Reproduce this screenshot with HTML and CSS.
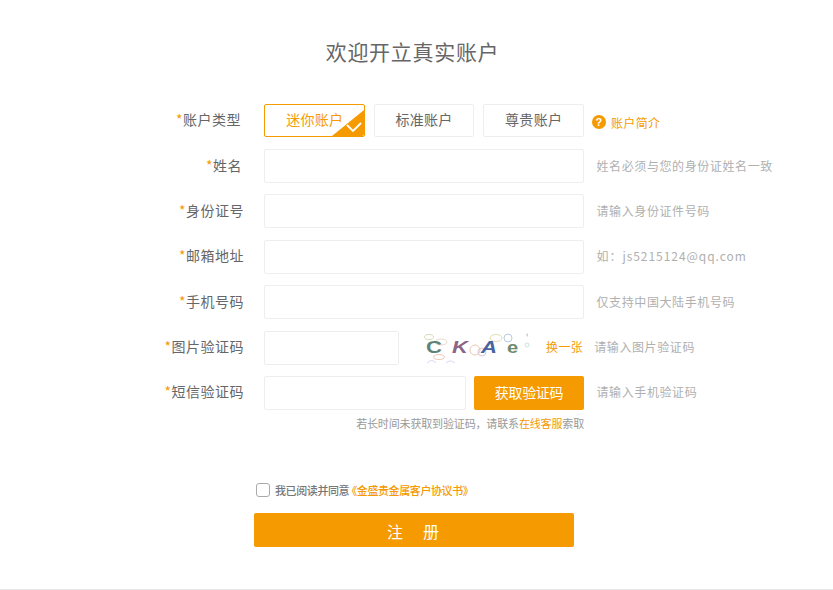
FILE: index.html
```html
<!DOCTYPE html>
<html lang="zh-CN">
<head>
<meta charset="utf-8">
<title>欢迎开立真实账户</title>
<link rel="stylesheet" href="styles.css">
</head>
<body>
<main class="page">
  <h1 class="title">欢迎开立真实账户</h1>
  <form class="form">
    <div class="row row-type">
      <label class="label label-type"><i>*</i>账户类型</label>
      <div class="types">
        <div class="type active">迷你账户
          <svg class="tick" width="32" height="26" viewBox="0 0 32 26"><path d="M32 0V24a2 2 0 0 1-2 2H0Z" fill="#f59a00"/><path d="M15 15l6 6 8-8" fill="none" stroke="#fff" stroke-width="1.800"/></svg>
        </div>
        <div class="type">标准账户</div>
        <div class="type">尊贵账户</div>
      </div>
      <a class="intro"><span class="q">?</span>账户简介</a>
    </div>
    <div class="row">
      <label class="label label-name"><i>*</i>姓名</label>
      <div class="input"></div>
      <span class="hint">姓名必须与您的身份证姓名一致</span>
    </div>
    <div class="row">
      <label class="label"><i>*</i>身份证号</label>
      <div class="input"></div>
      <span class="hint">请输入身份证件号码</span>
    </div>
    <div class="row">
      <label class="label"><i>*</i>邮箱地址</label>
      <div class="input"></div>
      <span class="hint spaced">如：js5215124@qq.com</span>
    </div>
    <div class="row">
      <label class="label"><i>*</i>手机号码</label>
      <div class="input"></div>
      <span class="hint">仅支持中国大陆手机号码</span>
    </div>
    <div class="row">
      <label class="label"><i>*</i>图片验证码</label>
      <div class="input input-s"></div>
      <svg class="captcha" width="110" height="38" viewBox="0 0 110 38">
        <g fill="none" stroke-width="1">
          <ellipse cx="5" cy="8" rx="4.500" ry="2.500" stroke="#d5ddb5"/>
          <ellipse cx="17" cy="13" rx="6" ry="3" stroke="#e6d9c8"/>
          <ellipse cx="72" cy="9" rx="6" ry="3.500" stroke="#e2dfb0"/>
          <circle cx="84" cy="9" r="4" stroke="#b8cbe6"/>
          <ellipse cx="15" cy="28" rx="5.500" ry="2.500" stroke="#eccabc"/>
          <circle cx="51" cy="21" r="5" stroke="#eec5b5"/>
          <circle cx="58" cy="23" r="4" stroke="#d9c5cf"/>
          <path d="M3 34q5-5 9 0M22 34q4-4 9 0" stroke="#d9d6ec"/>
          <circle cx="103" cy="16" r="2" stroke="#c9e5d5"/>
        </g>
        <path d="M102 6l2-2v4Z" fill="#b9d2e6"/>
        <text class="cap" transform="translate(2 24) scale(1.300 1)" fill="#5f8378" font-size="17">C</text>
        <text class="cap cap-i" transform="translate(28 24) scale(1.300 1)" fill="#8e6486" font-size="17">K</text>
        <text class="cap cap-i" transform="translate(57 24) scale(1.300 1)" fill="#47649e" font-size="17">A</text>
        <text class="cap" transform="translate(83 24) scale(1.250 1)" fill="#6e8a6e" font-size="16">e</text>
      </svg>
      <a class="refresh">换一张</a>
      <span class="hint hint-tight">请输入图片验证码</span>
    </div>
    <div class="row">
      <label class="label"><i>*</i>短信验证码</label>
      <div class="input input-m"></div>
      <div class="send">获取验证码</div>
      <span class="hint">请输入手机验证码</span>
    </div>
    <p class="note">若长时间未获取到验证码，请联系<a>在线客服</a>索取</p>
    <div class="agree">
      <span class="check"></span>
      <span class="agree-text">我已阅读并同意<a>《金盛贵金属客户协议书》</a></span>
    </div>
    <div class="submit">注　册</div>
  </form>
</main>
</body>
</html>
```

FILE: styles.css
```css
* { box-sizing: border-box; }
html, body { margin: 0; padding: 0; background: #fff; }
body {
  font-family: "Noto Sans CJK SC", "Liberation Sans", sans-serif;
  color: #666;
}
.page {
  width: 833px;
  height: 590px;
  overflow: hidden;
  border-bottom: 1px solid #e8e8e8;
}
.title {
  margin: 0;
  padding: 36px 8px 0 0;
  height: 104px;
  text-align: center;
  font-size: 21px;
  line-height: 30px;
  font-weight: 400;
  letter-spacing: .7px;
  color: #666;
}
.form { display: flex; flex-direction: column; }
.row {
  display: flex;
  align-items: center;
  height: 34px;
  margin-bottom: 11.400px;
}
.row-type { height: 33px; margin-bottom: 12px; }
.label {
  width: 244px;
  margin-right: 20px;
  padding-bottom: 3px;
  flex: none;
  text-align: right;
  font-size: 14px;
  letter-spacing: .5px;
  line-height: 20px;
}
.label-type { padding-right: 3px; }
.label-name { padding-right: 2px; }
.label i { color: #f59a00; font-style: normal; }
.types { display: flex; gap: 9px; }
.type {
  position: relative;
  width: 100.670px;
  height: 33px;
  border: 1px solid #eee;
  border-radius: 2px;
  text-align: center;
  font-size: 14px;
  line-height: 29px;
  letter-spacing: .3px;
  color: #666;
}
.type.active {
  border-color: #f59a00;
  color: #f59a00;
  padding-left: 1px;
  overflow: hidden;
}
.tick { position: absolute; right: 0; bottom: 0; }
.intro {
  display: flex;
  align-items: center;
  margin: 3px 0 0 8px;
  font-size: 12px;
  letter-spacing: .35px;
  color: #f59a00;
}
.q {
  display: block;
  width: 14px;
  height: 14px;
  margin-right: 5px;
  border-radius: 50%;
  background: #f59a00;
  color: #fff;
  font: 700 11px/14px "Liberation Sans", sans-serif;
  text-align: center;
}
.input {
  flex: none;
  width: 320px;
  height: 34px;
  border: 1px solid #eee;
  border-radius: 2px;
}
.input-s { width: 135px; }
.input-m { width: 202px; }
.hint {
  margin-left: 12.500px;
  padding-bottom: 2px;
  font-size: 12px;
  letter-spacing: .6px;
  color: #b0b0b0;
}
.hint.spaced { letter-spacing: .95px; }
.hint.hint-tight { margin-left: 11px; }
.captcha { flex: none; margin-left: 25px; }
.cap { font-family: "Liberation Sans", sans-serif; font-weight: 700; }
.cap-i { font-style: italic; }
.refresh {
  margin-left: 12px;
  padding-bottom: 2px;
  font-size: 12px;
  letter-spacing: .4px;
  color: #f59a00;
}
.send {
  flex: none;
  width: 110px;
  height: 34px;
  margin-left: 8px;
  border-radius: 2px;
  background: #f59a00;
  color: #fff;
  text-align: center;
  font-size: 14px;
  letter-spacing: -.3px;
  line-height: 32px;
}
.note {
  margin: -6px 0 0;
  width: 584px;
  text-align: right;
  font-size: 11px;
  line-height: 16px;
  letter-spacing: -.15px;
  color: #999;
}
.note a { color: #f59a00; }
.agree {
  display: flex;
  align-items: center;
  margin: 51px 0 0 256px;
  height: 16px;
}
.check {
  width: 14px;
  height: 14px;
  margin-right: 5px;
  border: 1px solid #aaa;
  border-radius: 3px;
}
.agree-text { font-size: 11px; letter-spacing: -.4px; color: #777; font-weight: 500; }
.agree-text a { color: #f59a00; letter-spacing: -.4px; margin-left: -3px; }
.submit {
  width: 320px;
  height: 34px;
  margin: 15px 0 0 254px;
  border-radius: 2px;
  background: #f59a00;
  color: #fff;
  text-align: center;
  font-size: 16px;
  letter-spacing: 2px;
  line-height: 36px;
}
```
